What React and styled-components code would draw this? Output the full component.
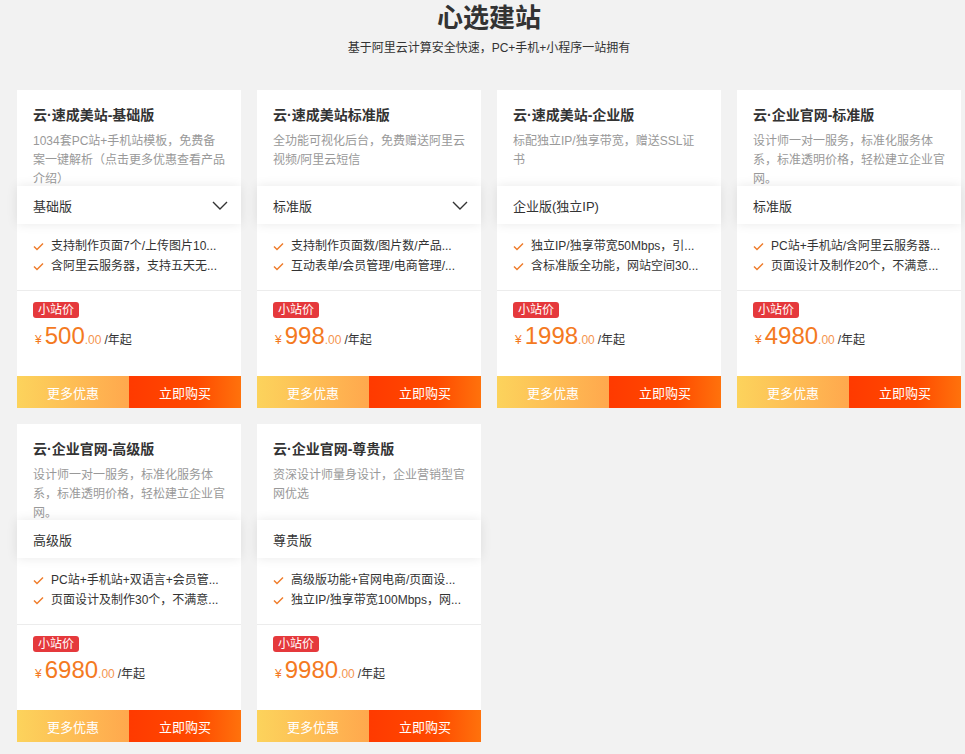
import React from 'react';
import styled, { createGlobalStyle } from 'styled-components';

const GlobalStyle = createGlobalStyle`
  body {
    margin: 0;
    background: #f2f2f2;
    font-family: "Liberation Sans", "Noto Sans CJK SC", sans-serif;
    color: #333;
  }
`;

// feature lines are cut in the source page, keep them as shown there
const plans = [
  {
    title: '云·速成美站-基础版',
    desc: '1034套PC站+手机站模板，免费备案一键解析（点击更多优惠查看产品介绍）',
    edition: '基础版',
    more: true,
    features: ['支持制作页面7个/上传图片10...', '含阿里云服务器，支持五天无...'],
    price: '500',
  },
  {
    title: '云·速成美站标准版',
    desc: '全功能可视化后台，免费赠送阿里云视频/阿里云短信',
    edition: '标准版',
    more: true,
    features: ['支持制作页面数/图片数/产品...', '互动表单/会员管理/电商管理/...'],
    price: '998',
  },
  {
    title: '云·速成美站-企业版',
    desc: '标配独立IP/独享带宽，赠送SSL证书',
    edition: '企业版(独立IP)',
    features: ['独立IP/独享带宽50Mbps，引...', '含标准版全功能，网站空间30...'],
    price: '1998',
  },
  {
    title: '云·企业官网-标准版',
    desc: '设计师一对一服务，标准化服务体系，标准透明价格，轻松建立企业官网。',
    edition: '标准版',
    features: ['PC站+手机站/含阿里云服务器...', '页面设计及制作20个，不满意...'],
    price: '4980',
  },
  {
    title: '云·企业官网-高级版',
    desc: '设计师一对一服务，标准化服务体系，标准透明价格，轻松建立企业官网。',
    edition: '高级版',
    features: ['PC站+手机站+双语言+会员管...', '页面设计及制作30个，不满意...'],
    price: '6980',
  },
  {
    title: '云·企业官网-尊贵版',
    desc: '资深设计师量身设计，企业营销型官网优选',
    edition: '尊贵版',
    features: ['高级版功能+官网电商/页面设...', '独立IP/独享带宽100Mbps，网...'],
    price: '9980',
  },
];

const Page = styled.div`
  width: 944px;
  margin-left: 17px;
  padding-bottom: 12px;
`;

const Heading = styled.h1`
  margin: 0;
  text-align: center;
  font-size: 26px;
  line-height: 36px;
  font-weight: bold;
  color: #333;
`;

const Sub = styled.p`
  margin: 4px 0 0;
  text-align: center;
  font-size: 12px;
  line-height: 16px;
  color: #333;
`;

const Grid = styled.div`
  margin-top: 34px;
  display: grid;
  grid-template-columns: repeat(4, 224px);
  gap: 16px;
`;

const Card = styled.div`
  background: #fff;
  display: flex;
  flex-direction: column;
`;

const Head = styled.div`
  height: 96px;
  box-sizing: border-box;
  padding: 16px 16px 0;
  overflow: hidden;
`;

const Title = styled.h3`
  margin: 0;
  font-size: 14px;
  line-height: 18px;
  font-weight: bold;
  color: #333;
`;

const Desc = styled.p`
  margin: 8px 0 0;
  font-size: 12px;
  line-height: 19px;
  color: #999;
`;

const Select = styled.div`
  position: relative;
  z-index: 1;
  height: 38px;
  padding: 0 13px 0 16px;
  display: flex;
  align-items: center;
  justify-content: space-between;
  background: #fff;
  box-shadow: 0 0 12px rgba(0, 0, 0, 0.09);
  font-size: 13px;
  color: #333;
`;

const Features = styled.ul`
  margin: 0;
  padding: 12px 16px 14px;
  list-style: none;
  border-bottom: 1px solid #ececec;
`;

const Feature = styled.li`
  display: flex;
  align-items: center;
  gap: 7px;
  font-size: 12px;
  line-height: 20px;
  color: #333;
  span {
    flex: 1;
    min-width: 0;
    white-space: nowrap;
    overflow: hidden;
    text-overflow: ellipsis;
  }
`;

const PriceBox = styled.div`
  height: 85px;
  box-sizing: border-box;
  padding: 9px 16px 0;
`;

const Badge = styled.span`
  display: inline-block;
  height: 16px;
  line-height: 16px;
  padding: 0 5px;
  border-radius: 3px;
  background: #e5393c;
  color: #fff;
  font-size: 12px;
`;

const PriceRow = styled.div`
  margin-top: 4px;
  display: flex;
  align-items: baseline;
  height: 28px;
  line-height: 28px;
  color: #f47a1f;
  font-size: 12px;
`;

const Yen = styled.span`
  margin: 0 3px 0 2px;
`;

const Big = styled.span`
  font-size: 24px;
`;

const Cents = styled.span`
  color: #f4954f;
`;

const Unit = styled.span`
  margin-left: 3px;
  color: #333;
`;

const Actions = styled.div`
  display: grid;
  grid-template-columns: 1fr 1fr;
  height: 32px;
`;

const Action = styled.button`
  border: 0;
  padding: 0;
  font-family: inherit;
  font-size: 13px;
  color: #fff;
  cursor: pointer;
  background: ${p => (p.$buy
    ? 'linear-gradient(90deg, #ff3a00, #ff4a00 60%, #ff720c)'
    : 'linear-gradient(90deg, #fcd35c, #ffa84d)')};
`;

const Check = () => (
  <svg width="11" height="9" viewBox="0 0 11 9">
    <polyline points="1,4.5 4,7.5 10,1.5" fill="none" stroke="#ef7d2c" strokeWidth="1.5" />
  </svg>
);

const Chevron = () => (
  <svg width="16" height="9" viewBox="0 0 16 9">
    <polyline points="1,1 8,8 15,1" fill="none" stroke="#333" strokeWidth="1.4" />
  </svg>
);

const PlanCard = ({ plan }) => (
  <Card>
    <Head>
      <Title>{plan.title}</Title>
      <Desc>{plan.desc}</Desc>
    </Head>
    <Select>
      <span>{plan.edition}</span>
      {plan.more && <Chevron />}
    </Select>
    <Features>
      {plan.features.map(f => (
        <Feature key={f}>
          <Check />
          <span>{f}</span>
        </Feature>
      ))}
    </Features>
    <PriceBox>
      <Badge>小站价</Badge>
      <PriceRow>
        <Yen>¥</Yen>
        <Big>{plan.price}</Big>
        <Cents>.00</Cents>
        <Unit>/年起</Unit>
      </PriceRow>
    </PriceBox>
    <Actions>
      <Action>更多优惠</Action>
      <Action $buy>立即购买</Action>
    </Actions>
  </Card>
);

export default function App() {
  return (
    <>
      <GlobalStyle />
      <Page>
        <Heading>心选建站</Heading>
        <Sub>基于阿里云计算安全快速，PC+手机+小程序一站拥有</Sub>
        <Grid>
          {plans.map(p => (
            <PlanCard key={p.title} plan={p} />
          ))}
        </Grid>
      </Page>
    </>
  );
}
